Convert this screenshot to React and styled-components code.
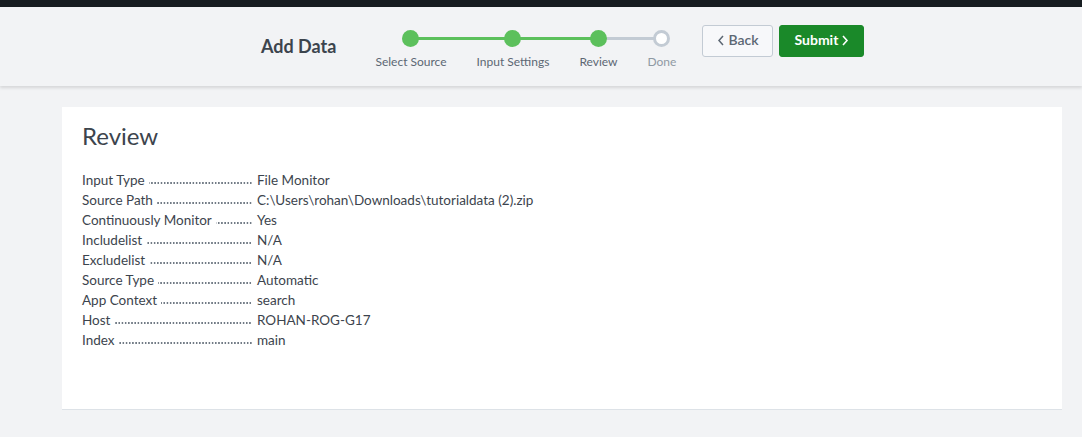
import React from 'react';
import styled, { createGlobalStyle } from 'styled-components';

const GlobalStyle = createGlobalStyle`
    html, body {
        margin: 0;
        padding: 0;
        background: #f2f3f5;
        font-family: Lato, "Open Sans", "Liberation Sans", sans-serif;
        color: #3c444d;
    }
`;

const TopBar = styled.div`
    height: 7px;
    background-color: #171d21;
`;

const Header = styled.header`
    height: 79px;
    background-color: #f2f3f5;
    box-shadow: 0 2px 3px rgba(0, 0, 0, 0.12);
    display: flex;
    align-items: flex-start;
    padding-left: 261px;
    box-sizing: border-box;
`;

const Title = styled.h1`
    margin: 29px 24px 0 0;
    font-size: 18px;
    font-weight: 700;
    color: #3c444d;
    line-height: 20px;
`;

const Steps = styled.ol`
    display: flex;
    list-style: none;
    margin: 23px 0 0;
    padding: 0;
`;

const Step = styled.li`
    position: relative;
    display: flex;
    flex-direction: column;
    align-items: center;
    padding: 0 15px;

    &::before, &::after {
        content: '';
        position: absolute;
        top: 7px;
        height: 3px;
    }
    &::before {
        left: 0;
        right: 50%;
        background: ${p => (p.first ? 'transparent' : p.leftColor)};
    }
    &::after {
        left: 50%;
        right: 0;
        background: ${p => (p.last ? 'transparent' : p.rightColor)};
    }
`;

const Dot = styled.span`
    position: relative;
    z-index: 1;
    width: 17px;
    height: 17px;
    border-radius: 50%;
    box-sizing: border-box;
    background: ${p => (p.done ? '#5cc05c' : '#fff')};
    border: ${p => (p.done ? 'none' : '3px solid #c3cbd4')};
`;

const StepLabel = styled.span`
    margin-top: 8px;
    font-size: 12px;
    line-height: 14px;
    color: ${p => (p.done ? '#5c6773' : '#8f99a3')};
    white-space: nowrap;
`;

const Buttons = styled.div`
    display: flex;
    gap: 6px;
    margin: 18px 0 0 11px;
`;

const Button = styled.button`
    height: 32px;
    box-sizing: border-box;
    border-radius: 3px;
    font-family: inherit;
    font-size: 14px;
    line-height: 14px;
    padding: 0 ${p => (p.primary ? '14px' : '14px')} 2px;
    border: 1px solid ${p => (p.primary ? '#1a8929' : '#c3cbd4')};
    background: ${p => (p.primary ? '#1a8929' : '#f7f8fa')};
    color: ${p => (p.primary ? '#fff' : '#5c6773')};
    font-weight: ${p => (p.primary ? 700 : 600)};
    display: flex;
    align-items: center;
    gap: 3px;
`;

const Chevron = styled.svg`
    width: 8px;
    height: 11px;
`;

const Main = styled.main`
    padding: 21px 20px 0 62px;
`;

const Card = styled.section`
    width: 1000px;
    height: 303px;
    box-sizing: border-box;
    background: #fff;
    border-bottom: 1px solid #dde2e7;
    padding: 17px 20px;
`;

const CardTitle = styled.h2`
    margin: 0 0 22px;
    font-size: 24px;
    font-weight: 400;
    line-height: 24px;
    color: #3c444d;
`;

const Row = styled.div`
    display: flex;
    font-size: 13.5px;
    line-height: 20px;
    color: #3c444d;
`;

const Key = styled.div`
    width: 175px;
    display: flex;
    white-space: nowrap;
    flex-shrink: 0;
`;

const Dots = styled.span`
    flex: 1;
    align-self: flex-end;
    height: 2px;
    margin: 0 5px 6px 4px;
    background-image: radial-gradient(circle, #5c6773 0.6px, transparent 0.9px);
    background-size: 3.2px 2px;
    background-repeat: repeat-x;
    background-position: right bottom;
`;

const steps = [
    { label: 'Select Source', done: true },
    { label: 'Input Settings', done: true },
    { label: 'Review', done: true },
    { label: 'Done', done: false },
];

const rows = [
    ['Input Type', 'File Monitor'],
    ['Source Path', 'C:\\Users\\rohan\\Downloads\\tutorialdata (2).zip'],
    ['Continuously Monitor', 'Yes'],
    ['Includelist', 'N/A'],
    ['Excludelist', 'N/A'],
    ['Source Type', 'Automatic'],
    ['App Context', 'search'],
    ['Host', 'ROHAN-ROG-G17'],
    ['Index', 'main'],
];

const App = () => {
    return (
        <>
            <GlobalStyle />
            <TopBar />
            <Header>
                <Title>Add Data</Title>
                <Steps>
                    {steps.map((s, i) => (
                        <Step
                            key={s.label}
                            first={i === 0}
                            last={i === steps.length - 1}
                            leftColor={s.done ? '#5cc05c' : '#c3cbd4'}
                            rightColor={steps[i + 1] && steps[i + 1].done ? '#5cc05c' : '#c3cbd4'}
                        >
                            <Dot done={s.done} />
                            <StepLabel done={s.done}>{s.label}</StepLabel>
                        </Step>
                    ))}
                </Steps>
                <Buttons>
                    <Button>
                        <Chevron viewBox="0 0 8 11"><path d="M6 1 L2 5.5 L6 10" fill="none" stroke="currentColor" strokeWidth="1.5" /></Chevron>
                        Back
                    </Button>
                    <Button primary>
                        Submit
                        <Chevron viewBox="0 0 8 11"><path d="M2 1 L6 5.5 L2 10" fill="none" stroke="currentColor" strokeWidth="1.6" /></Chevron>
                    </Button>
                </Buttons>
            </Header>
            <Main>
                <Card>
                    <CardTitle>Review</CardTitle>
                    {rows.map(([k, v]) => (
                        <Row key={k}>
                            <Key>
                                {k}
                                <Dots />
                            </Key>
                            <span>{v}</span>
                        </Row>
                    ))}
                </Card>
            </Main>
        </>
    );
};

export default App;
